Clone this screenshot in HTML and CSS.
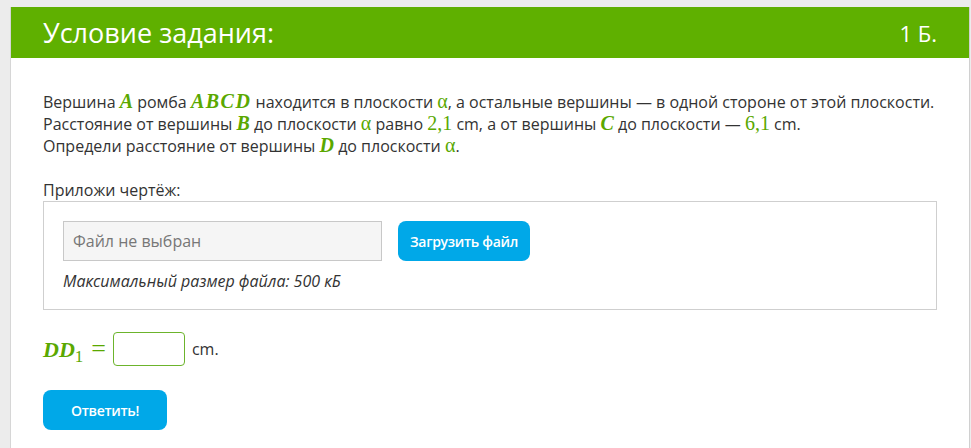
FILE: index.html
```html
<!DOCTYPE html>
<html lang="ru">
<head>
    <meta charset="UTF-8">
    <title>Условие задания</title>
    <link rel="stylesheet" href="styles.css">
</head>
<body>
    <div class="task">
        <header class="task-head">
            <h1>Условие задания:</h1>
            <span class="points">1 Б.</span>
        </header>

        <div class="task-body">
            <p class="statement">
                Вершина <i class="m">A</i> ромба <i class="m abcd">ABCD</i> находится в плоскости <span class="m">α</span>, а остальные вершины — в одной стороне от этой плоскости.<br>
                Расстояние от вершины <i class="m">B</i> до плоскости <span class="m">α</span> равно <span class="m">2,1</span> cm, а от вершины <i class="m">C</i> до плоскости — <span class="m">6,1</span> cm.<br>
                Определи расстояние от вершины <i class="m">D</i> до плоскости <span class="m">α</span>.
            </p>

            <div class="attach-label">Приложи чертёж:</div>
            <div class="attach">
                <div class="file-row">
                    <div class="file-name">Файл не выбран</div>
                    <button class="btn">Загрузить файл</button>
                </div>
                <div class="file-hint">Максимальный размер файла: 500 кБ</div>
            </div>

            <div class="answer">
                <span class="m eq"><i>DD</i><sub>1</sub><span class="eq-sign">=</span></span>
                <input class="answer-input" type="text">
                <span>cm.</span>
            </div>

            <button class="btn btn-submit">Ответить!</button>
        </div>
    </div>
</body>
</html>
```

FILE: styles.css
```css
body {
    margin: 0;
    padding: 7px 1px 0 10px;
    background: #ececec;
    font-family: 'Open Sans', sans-serif;
    color: #333;
}

.task {
    background: #fff;
    border-left: 1px solid #d6d6d6;
    border-right: 1px solid #d0d0d0;
    min-height: 460px;
}

.task-head {
    background: #5fb000;
    color: #fff;
    height: 51px;
    display: flex;
    align-items: center;
    justify-content: space-between;
    padding: 0 32px;
}

.task-head h1 {
    margin: 0;
    font-size: 27px;
    font-weight: 400;
}

.points {
    font-size: 22px;
}

.task-body {
    padding: 33px 32px 0 32px;
}

.statement {
    margin: 0;
    font-size: 16px;
    line-height: 22px;
}

.m {
    font-family: 'Liberation Serif', 'DejaVu Serif', serif;
    color: #5aa800;
    font-size: 20px;
    line-height: 14px;
}

i.m, .m i {
    font-style: italic;
    font-weight: bold;
}

.abcd {
    letter-spacing: 1.5px;
}

.attach-label {
    margin-top: 24px;
    font-size: 16px;
    line-height: 18px;
}

.attach {
    border: 1px solid #cfcfcf;
    margin-top: 2px;
    padding: 19px 19px 19px 19px;
    height: 69px;
}

.file-row {
    display: flex;
    align-items: center;
    gap: 16px;
}

.file-name {
    width: 308px;
    height: 38px;
    border: 1px solid #c8c8c8;
    background: #f5f5f5;
    color: #777;
    font-size: 16px;
    line-height: 38px;
    padding-left: 9px;
}

.btn {
    background: #00a8e8;
    color: #fff;
    border: none;
    border-radius: 8px;
    font-family: 'Open Sans', sans-serif;
    font-size: 14px;
    font-weight: 600;
    letter-spacing: -0.3px;
    height: 40px;
    padding: 0 12px;
}

.file-hint {
    margin-top: 10px;
    font-style: italic;
    font-size: 16px;
    line-height: 20px;
}

.answer {
    display: flex;
    align-items: center;
    gap: 7px;
    margin-top: 22px;
    font-size: 16px;
}

.eq {
    font-size: 22px;
    line-height: 30px;
}

.eq sub {
    font-size: 17px;
    font-style: normal;
    font-weight: normal;
    vertical-align: -5px;
    line-height: 0;
}

.eq-sign {
    font-size: 26px;
    margin-left: 8px;
}

.answer-input {
    width: 70px;
    height: 32px;
    border: 1px solid #6cb42c;
    border-radius: 4px;
    padding: 0;
}

.btn-submit {
    margin-top: 24px;
    width: 124px;
    height: 40px;
}
```
